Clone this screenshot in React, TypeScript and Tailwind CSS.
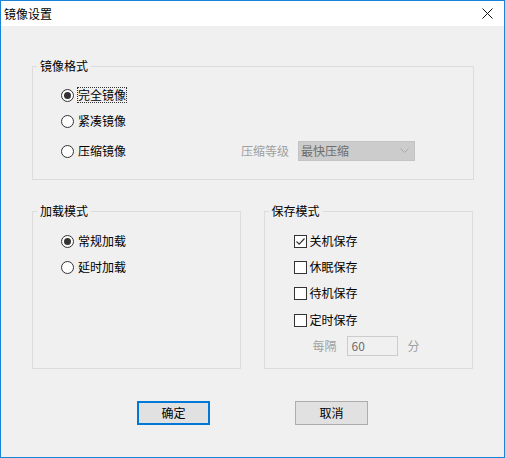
import React from "react";

const font = { fontFamily: '"Noto Sans CJK SC", "Microsoft YaHei", sans-serif' };

function Radio({ label, checked, focus }: { label: string; checked?: boolean; focus?: boolean }) {
  return (
    <div className="flex items-center h-4">
      <span className="w-[13px] h-[13px] rounded-full border border-[#333] bg-white flex items-center justify-center">
        {checked && <span className="w-[7px] h-[7px] rounded-full bg-[#333]" />}
      </span>
      <span
        className={
          "ml-[3px] leading-4 px-[1px] " +
          (focus ? "outline outline-1 outline-dotted outline-[#333] -outline-offset-1" : "")
        }
      >
        {label}
      </span>
    </div>
  );
}

function Check({ label, checked }: { label: string; checked?: boolean }) {
  return (
    <div className="flex items-center h-4">
      <span className="w-[13px] h-[13px] border border-[#333] bg-white flex items-center justify-center">
        {checked && (
          <svg width="11" height="11" viewBox="0 0 11 11">
            <path d="M1.5 5.5 L4.2 8.2 L9.5 2.5" fill="none" stroke="#333" strokeWidth="1.2" />
          </svg>
        )}
      </span>
      <span className="ml-[3px] leading-4">{label}</span>
    </div>
  );
}

function Group({ title, className, children }: { title: string; className?: string; children: React.ReactNode }) {
  return (
    <fieldset className={"border border-[#dcdcdc] " + (className ?? "")}>
      <legend className="ml-[4px] px-[3px] leading-4">{title}</legend>
      {children}
    </fieldset>
  );
}

export default function App() {
  return (
    <div
      className="w-[505px] h-[458px] bg-[#f0f0f0] border border-[#1883d7] flex flex-col text-[12px] text-black"
      style={font}
    >
      <div className="h-[25px] bg-white flex items-center justify-between pl-[3px] pr-[11px]">
        <span className="leading-4">镜像设置</span>
        <svg width="11" height="11" viewBox="0 0 11 11">
          <path d="M0.5 0.5 L10.5 10.5 M10.5 0.5 L0.5 10.5" stroke="#111" strokeWidth="1" />
        </svg>
      </div>

      <div className="px-[31px] pt-[32px]">
        <Group title="镜像格式" className="h-[122px] w-[442px]">
          <div className="pl-[28px] pt-[13px] flex flex-col">
            <Radio label="完全镜像" checked focus />
            <div className="mt-[10px]">
              <Radio label="紧凑镜像" />
            </div>
            <div className="mt-[12px] flex items-center h-5">
              <Radio label="压缩镜像" />
              <span className="ml-[114px] text-[#a0a0a0] leading-4">压缩等级</span>
              <div className="ml-[9px] w-[117px] h-[20px] bg-[#cccccc] border border-[#c4c4c4] flex items-center justify-between pl-[2px] pr-[5px]">
                <span className="text-[#6d6d6d] leading-4">最快压缩</span>
                <svg width="9" height="6" viewBox="0 0 9 6">
                  <path d="M0.5 0.5 L4.5 4.5 L8.5 0.5" fill="none" stroke="#a8a8a8" strokeWidth="1" />
                </svg>
              </div>
            </div>
          </div>
        </Group>

        <div className="mt-[23px] flex gap-[23px]">
          <Group title="加载模式" className="w-[209px] h-[166px]">
            <div className="pl-[28px] pt-[14px] flex flex-col gap-[10px]">
              <Radio label="常规加载" checked />
              <Radio label="延时加载" />
            </div>
          </Group>
          <Group title="保存模式" className="w-[210px] h-[166px]">
            <div className="pl-[29px] pt-[14px] flex flex-col">
              <Check label="关机保存" checked />
              <div className="mt-[10px]">
                <Check label="休眠保存" />
              </div>
              <div className="mt-[10px]">
                <Check label="待机保存" />
              </div>
              <div className="mt-[11px]">
                <Check label="定时保存" />
              </div>
              <div className="mt-[8px] flex items-center h-5 text-[#a0a0a0]">
                <span className="ml-[19px] leading-4">每隔</span>
                <div className="ml-[10px] w-[51px] h-[20px] border border-[#cccccc] bg-[#f0f0f0] flex items-center pl-[4px]">
                  <span className="text-[#6d6d6d] leading-4">60</span>
                </div>
                <span className="ml-[10px] leading-4">分</span>
              </div>
            </div>
          </Group>
        </div>

        <div className="mt-[32px] flex">
          <button className="ml-[105px] w-[73px] h-[24px] bg-[#e1e1e1] border-2 border-[#0078d7] leading-4">
            确定
          </button>
          <button className="ml-[85px] w-[73px] h-[24px] bg-[#e1e1e1] border border-[#adadad] leading-4">
            取消
          </button>
        </div>
      </div>
    </div>
  );
}
